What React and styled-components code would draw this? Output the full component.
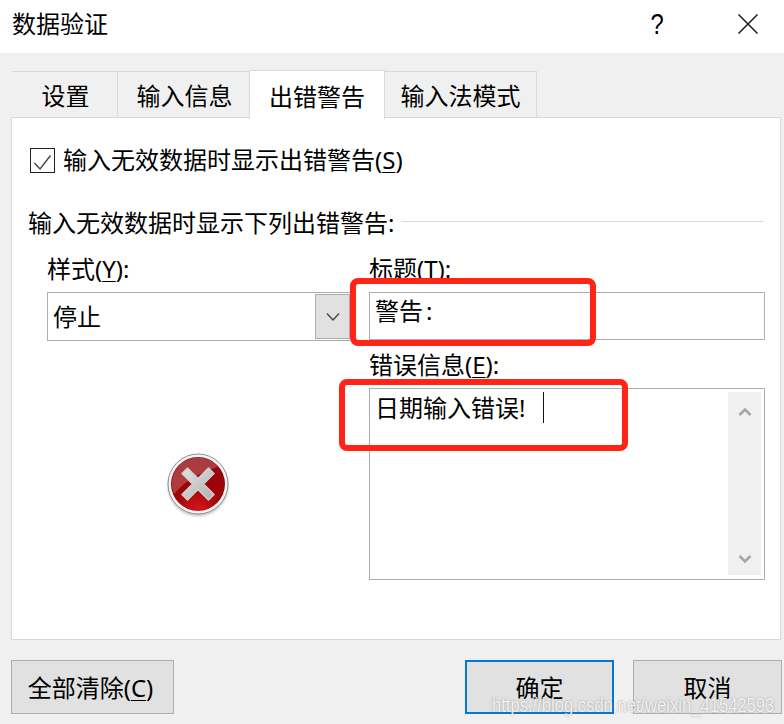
import React from "react";
import styled, { createGlobalStyle } from "styled-components";

const GlobalStyle = createGlobalStyle`
  html, body { margin: 0; padding: 0; background: #f0f0f0; }
  * { box-sizing: border-box; }
`;

const Dialog = styled.div`
  position: relative;
  width: 784px;
  height: 724px;
  overflow: hidden;
  display: flex;
  flex-direction: column;
  background: #f0f0f0;
  color: #000;
  font-family: "Noto Sans", "Noto Sans CJK SC", sans-serif;
  font-size: 24px;
  line-height: 32px;
`;

const TitleBar = styled.header`
  height: 53px;
  flex: none;
  background: #fff;
  display: flex;
  align-items: center;
  padding: 0 25px 5px 12px;
`;

const Title = styled.div`
  flex: 1;
`;

const Help = styled.span`
  width: 20px;
  margin-right: 70px;
  text-align: center;
  font-family: "Liberation Sans", sans-serif;
  font-size: 29px;
  transform: scaleX(0.82);
`;

const TabRow = styled.div`
  flex: none;
  height: 49px;
  margin-top: 16px;
  padding-left: 12px;
  display: flex;
  align-items: flex-end;
  position: relative;
  z-index: 1;
`;

const Tab = styled.div`
  width: ${({ $w }) => $w}px;
  height: ${({ $active }) => ($active ? 49 : 47)}px;
  margin-bottom: ${({ $active }) => ($active ? -1 : 0)}px;
  background: ${({ $active }) => ($active ? "#fff" : "#f0f0f0")};
  border: 1px solid #d9d9d9;
  border-left-width: ${({ $active }) => ($active ? 1 : 0)}px;
  border-right-width: ${({ $next }) => ($next ? 0 : 1)}px;
  border-bottom-width: ${({ $active }) => ($active ? 0 : 1)}px;
  display: flex;
  align-items: center;
  justify-content: center;
  padding: 3px ${({ $padR }) => $padR || 0}px 0 ${({ $padL }) => $padL || 0}px;
`;

const Panel = styled.section`
  flex: none;
  height: 523px;
  width: 770px;
  margin-left: 11px;
  margin-top: -1px;
  background: #fff;
  border: 1px solid #d9d9d9;
  padding: 26px 16px 0 18px;
`;

const CheckRow = styled.div`
  display: flex;
  align-items: center;
  gap: 8px;
  height: 32px;
`;

const CheckBox = styled.span`
  width: 25px;
  height: 25px;
  border: 1px solid #222;
  background: #fff;
  display: block;
`;

const Key = styled.span`
  text-decoration: underline;
  text-underline-offset: 3px;
  text-decoration-thickness: 1px;
`;

const GroupHead = styled.div`
  margin: 31px 0 0 -2px;
  display: flex;
  align-items: center;
  height: 32px;
`;

const GroupLine = styled.div`
  flex: 1;
  height: 1px;
  margin: 0 0 4px 7px;
  background: #dcdcdc;
`;

const Columns = styled.div`
  margin-top: 15px;
  padding-left: 17px;
  display: grid;
  grid-template-columns: 303px 396px;
  column-gap: 19px;
`;

const Column = styled.div`
  display: flex;
  flex-direction: column;
`;

const FieldLabel = styled.div`
  height: 32px;
  margin-top: -1px;
  margin-bottom: 7px;
`;

const Select = styled.div`
  height: 49px;
  border: 1px solid #adadad;
  border-right: 0;
  display: flex;
  align-items: center;
  padding-left: 5px;
  background: #fff;
`;

const SelectValue = styled.div`
  flex: 1;
`;

const SelectArrow = styled.div`
  width: 35px;
  height: 45px;
  background: #e1e1e1;
  border: 1px solid #adadad;
  display: flex;
  align-items: center;
  justify-content: center;
`;

const TextInput = styled.div`
  height: 48px;
  border: 1px solid #adadad;
  padding: 2px 5px;
  background: #fff;
  margin-bottom: 10px;
`;

const TextArea = styled.div`
  position: relative;
  height: 192px;
  border: 1px solid #adadad;
  padding: 2px 0 2px 5px;
  background: #fff;
  display: flex;
  justify-content: space-between;
`;

const Message = styled.div`
  display: flex;
  align-items: flex-start;
  height: 32px;
  margin-top: 1px;
`;

const Caret = styled.span`
  width: 1px;
  height: 31px;
  margin-left: 18px;
  background: #111;
`;

const Colon = styled.span`
  margin-left: 3px;
`;

const ScrollBar = styled.div`
  width: 33px;
  height: 183px;
  margin: 1px 3px 0 0;
  background: #f0f0f0;
  display: flex;
  flex-direction: column;
  justify-content: space-between;
  align-items: center;
  padding: 15px 0 11px;
`;

const ErrorIconWrap = styled.div`
  display: flex;
  justify-content: center;
  margin-top: 111px;
  padding-right: 2px;
`;

const Footer = styled.footer`
  margin-top: 20px;
  padding: 0 2px 0 11px;
  display: flex;
  justify-content: space-between;
`;

const FooterRight = styled.div`
  display: flex;
  gap: 19px;
`;

const Button = styled.div`
  width: ${({ $w }) => $w}px;
  height: 54px;
  background: #e1e1e1;
  border: ${({ $primary }) => ($primary ? "2px solid #0078d7" : "1px solid #adadad")};
  display: flex;
  align-items: center;
  justify-content: center;
  padding: 2px ${({ $padR }) => $padR || 0}px 0 0;
`;

const Annotation = styled.div`
  position: absolute;
  left: ${({ $x }) => $x}px;
  top: ${({ $y }) => $y}px;
  width: ${({ $w }) => $w}px;
  height: ${({ $h }) => $h}px;
  border: 6px solid #ff2415;
  border-radius: 8px;
  z-index: 2;
`;

const Watermark = styled.div`
  position: absolute;
  right: 10px;
  bottom: 6px;
  z-index: 3;
  font-family: "Liberation Sans", sans-serif;
  font-size: 21px;
  line-height: 26px;
  color: rgba(255, 255, 255, 0.85);
  text-shadow: 0 0 2px rgba(110, 110, 110, 0.7);
  transform: scaleX(0.79);
  transform-origin: right center;
  white-space: nowrap;
`;

const CloseIcon = () => (
  <svg width="22" height="22" viewBox="0 0 22 22">
    <path d="M1.5 1.5 L20.5 20.5 M20.5 1.5 L1.5 20.5" stroke="#222" strokeWidth="1.6" fill="none" />
  </svg>
);

const CheckMark = () => (
  <svg width="23" height="23" viewBox="0 0 23 23">
    <path d="M3.5 12 L9 18 L19.5 4.5" stroke="#444" strokeWidth="1.4" fill="none" />
  </svg>
);

const ChevronDown = () => (
  <svg width="16" height="10" viewBox="0 0 16 10">
    <path d="M2 1.5 L8 8 L14 1.5" stroke="#444" strokeWidth="1.3" fill="none" />
  </svg>
);

const ScrollArrow = ({ down }) => (
  <svg width="14" height="10" viewBox="0 0 14 10">
    <path
      d={down ? "M1.5 2 L7 7.5 L12.5 2" : "M1.5 8 L7 2.5 L12.5 8"}
      stroke="#a6a6a6"
      strokeWidth="2.6"
      fill="none"
    />
  </svg>
);

const ErrorIcon = () => (
  <svg width="64" height="66" viewBox="0 0 64 66">
    <defs>
      <radialGradient id="redFill" cx="50%" cy="95%" r="85%">
        <stop offset="0%" stopColor="#d3161b" />
        <stop offset="50%" stopColor="#a00307" />
        <stop offset="100%" stopColor="#93050a" />
      </radialGradient>
      <linearGradient id="crossFill" x1="0" y1="0" x2="1" y2="1">
        <stop offset="0%" stopColor="#e2e2e2" />
        <stop offset="100%" stopColor="#b0b0b0" />
      </linearGradient>
      <radialGradient id="shade" cx="50%" cy="50%" r="50%">
        <stop offset="85%" stopColor="#777" stopOpacity="0.55" />
        <stop offset="100%" stopColor="#777" stopOpacity="0" />
      </radialGradient>
    </defs>
    <circle cx="32" cy="34" r="32" fill="url(#shade)" />
    <circle cx="32" cy="32" r="30" fill="#f4f4f4" stroke="#8f8f8f" strokeWidth="1" />
    <circle cx="32" cy="32" r="27" fill="url(#redFill)" />
    <path d="M6 30 A26 26 0 0 1 52 15 C42 18 24 24 8 42 A26 26 0 0 1 6 30 Z" fill="#fff" opacity="0.22" />
    <path
      d="M21.5 16 L32 26.5 L42.5 16 L48 21.5 L37.5 32 L48 42.5 L42.5 48 L32 37.5 L21.5 48 L16 42.5 L26.5 32 L16 21.5 Z"
      fill="url(#crossFill)"
      stroke="#cfcfcf"
      strokeWidth="1.5"
      strokeLinejoin="round"
    />
  </svg>
);

export default function App() {
  return (
    <>
      <GlobalStyle />
      <Dialog>
        <TitleBar>
          <Title>数据验证</Title>
          <Help>?</Help>
          <CloseIcon />
        </TitleBar>

        <TabRow>
          <Tab $w={106} $padL={2}>设置</Tab>
          <Tab $w={131} $padL={2} $next>输入信息</Tab>
          <Tab $w={136} $active>出错警告</Tab>
          <Tab $w={152}>输入法模式</Tab>
        </TabRow>

        <Panel>
          <CheckRow>
            <CheckBox><CheckMark /></CheckBox>
            <span>输入无效数据时显示出错警告(<Key>S</Key>)</span>
          </CheckRow>

          <GroupHead>
            <span>输入无效数据时显示下列出错警告:</span>
            <GroupLine />
          </GroupHead>

          <Columns>
            <Column>
              <FieldLabel>样式(<Key>Y</Key>):</FieldLabel>
              <Select>
                <SelectValue>停止</SelectValue>
                <SelectArrow><ChevronDown /></SelectArrow>
              </Select>
              <ErrorIconWrap><ErrorIcon /></ErrorIconWrap>
            </Column>
            <Column>
              <FieldLabel>标题(<Key>T</Key>):</FieldLabel>
              <TextInput>警告<Colon>:</Colon></TextInput>
              <FieldLabel>错误信息(<Key>E</Key>):</FieldLabel>
              <TextArea>
                <Message>日期输入错误!<Caret /></Message>
                <ScrollBar>
                  <ScrollArrow />
                  <ScrollArrow down />
                </ScrollBar>
              </TextArea>
            </Column>
          </Columns>
        </Panel>

        <Footer>
          <Button $w={163} $padR={4}>全部清除(<Key>C</Key>)</Button>
          <FooterRight>
            <Button $w={149} $primary>确定</Button>
            <Button $w={149}>取消</Button>
          </FooterRight>
        </Footer>

        <Annotation $x={350} $y={278} $w={246} $h={68} />
        <Annotation $x={339} $y={379} $w={289} $h={72} />
        <Watermark>https://blog.csdn.net/weixin_41542593</Watermark>
      </Dialog>
    </>
  );
}
